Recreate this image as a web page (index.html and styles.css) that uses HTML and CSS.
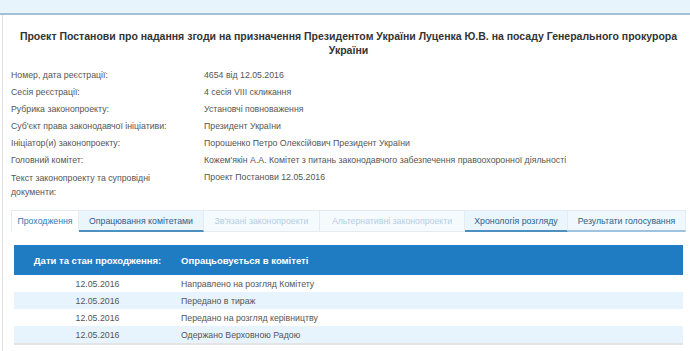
FILE: index.html
```html
<!DOCTYPE html>
<html lang="uk">
<head>
  <meta charset="UTF-8">
  <title>Картка законопроекту</title>
  <link rel="stylesheet" href="styles.css">
</head>
<body>
  <div class="topbar"></div>
  <div class="page">
    <h1>Проект Постанови про надання згоди на призначення Президентом України Луценка Ю.В. на посаду Генерального прокурора України</h1>
    <div class="info">
      <div class="label">Номер, дата реєстрації:</div>
      <div class="value">4654 від 12.05.2016</div>
      <div class="label">Сесія реєстрації:</div>
      <div class="value">4 сесія VIII скликання</div>
      <div class="label">Рубрика законопроекту:</div>
      <div class="value">Установчі повноваження</div>
      <div class="label">Суб'єкт права законодавчої ініціативи:</div>
      <div class="value">Президент України</div>
      <div class="label">Ініціатор(и) законопроекту:</div>
      <div class="value">Порошенко Петро Олексійович Президент України</div>
      <div class="label">Головний комітет:</div>
      <div class="value">Кожем'якін А.А. Комітет з питань законодавчого забезпечення правоохоронної діяльності</div>
      <div class="label docs">Текст законопроекту та супровідні документи:</div>
      <div class="value">Проект Постанови 12.05.2016</div>
    </div>

    <div class="tabs">
      <div class="tab active tab-flow">Проходження</div>
      <div class="tab link tab-comm">Опрацювання комітетами</div>
      <div class="tab disabled tab-linked">Зв'язані законопроекти</div>
      <div class="tab disabled tab-alt">Альтернативні законопроекти</div>
      <div class="tab link tab-chrono">Хронологія розгляду</div>
      <div class="tab plain tab-votes">Результати голосування</div>
    </div>
    <div class="panel">
      <table class="flow">
        <thead>
          <tr>
            <th class="date">Дати та стан проходження:</th>
            <th>Опрацьовується в комітеті</th>
          </tr>
        </thead>
        <tbody>
          <tr><td class="date">12.05.2016</td><td>Направлено на розгляд Комітету</td></tr>
          <tr><td class="date">12.05.2016</td><td>Передано в тираж</td></tr>
          <tr><td class="date">12.05.2016</td><td>Передано на розгляд керівництву</td></tr>
          <tr><td class="date">12.05.2016</td><td>Одержано Верховною Радою</td></tr>
        </tbody>
      </table>
    </div>
  </div>
</body>
</html>
```

FILE: styles.css
```css
/* Базові стилі */
body {
  margin: 0;
  font-family: "Liberation Sans", Arial, sans-serif;
  color: #333;
  background: #fff;
}
.topbar {
  height: 13px;
  background: #e8f4fc;
  border-bottom: 2px solid #a3c0d6;
}
.page {
  margin-left: 2px;
  border-left: 1px solid #e2e2e2;
  padding: 0 4px 0 8px;
  height: 336px;
  box-sizing: border-box;
}
h1 {
  margin: 0;
  padding: 14px 6px 0;
  font-size: 10.5px;
  line-height: 14px;
  text-align: center;
  color: #333;
}

/* Відомості про законопроект */
.info {
  display: grid;
  grid-template-columns: 193px 1fr;
  grid-auto-rows: minmax(17px, auto);
  margin-top: 10px;
  font-size: 8.75px;
  color: #555;
}
.label, .value {
  line-height: 17px;
}
.info .docs {
  line-height: 14px;
  padding-top: 2px;
  max-width: 150px;
}

/* Вкладки */
.tabs {
  display: flex;
  margin-top: 11px;
  font-size: 8.75px;
  height: 22px;
}
.tab {
  box-sizing: border-box;
  text-align: center;
  line-height: 20px;
  border: 1px solid #e4ecf2;
  border-left: 0;
  background: #f1f8fd;
  color: #2a5f8a;
  white-space: nowrap;
}
.tab:first-child {
  border-left: 1px solid #e4ecf2;
}
.tab-flow { width: 68px; }
.tab-comm { width: 125px; }
.tab-linked { width: 116px; }
.tab-alt { width: 145px; }
.tab-chrono { width: 103px; }
.tab-votes { width: 118px; }
.tab.active {
  background: #fff;
  color: #337ab7;
  border-bottom-color: #fff;
}
.tab.link {
  background: #eaf5fd;
  border-bottom: 2px solid #4d8fbf;
}
.tab.disabled {
  color: #b3cfe3;
  background: #f5fafd;
}
.tab.plain {
  color: #2a5f8a;
  border-bottom: 2px solid #9fc3de;
}

/* Таблиця проходження */
.panel {
  padding: 13px 3px 0;
}
.flow {
  width: 100%;
  border-collapse: collapse;
  font-size: 8.75px;
}
.flow th {
  background: #1f7bc2;
  color: #fff;
  height: 30px;
  text-align: left;
  font-size: 9.5px;
  padding: 0;
}
.flow td {
  height: 17px;
  padding: 0;
  color: #555;
}
.flow .date {
  width: 167px;
  text-align: center;
}
.flow tbody tr:nth-child(even) td {
  background: #e8f4fd;
}
.flow tbody tr:last-child td {
  border-bottom: 2px solid #e4e4e4;
}
```
